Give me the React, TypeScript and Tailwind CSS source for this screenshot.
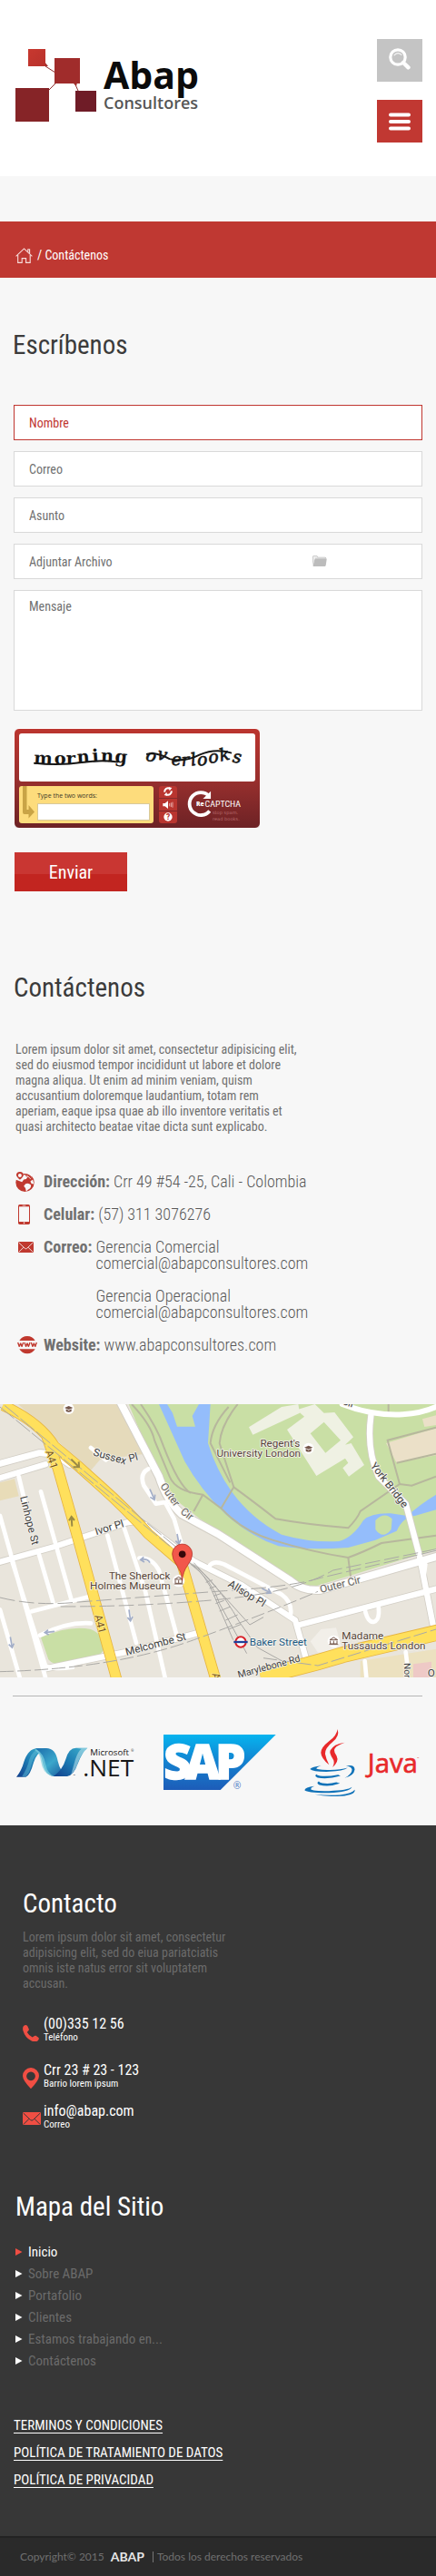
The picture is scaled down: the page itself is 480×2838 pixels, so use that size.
import type { ReactNode } from "react";

const heading = "text-[29px] leading-9";
const field = "block w-full border bg-white px-4 text-sm placeholder:opacity-100 outline-none";
const fieldIdle = "border-[#d9d9d9] text-[#707070] placeholder:text-[#707070]";
const fieldActive = "border-[#c0352f] text-[#c0352f] placeholder:text-[#c0352f]";

function Logo() {
  return (
    <svg viewBox="0 0 204 82" className="block w-[204px]" role="img" aria-label="Abap Consultores">
      <defs>
        <linearGradient id="node1" x1="0" y1="0" x2="1" y2="1">
          <stop offset="0" stopColor="#c8382f" />
          <stop offset="1" stopColor="#b8322c" />
        </linearGradient>
      </defs>
      <g stroke="#8f2a2a" strokeLinecap="round">
        <path d="M31 17 L33 19 L44 26 M33 49 L44 38 M65 37 L69 46" fill="none" strokeWidth="1" />
        <path d="M32 14 L31 19 L36 19 Z M31 43 L37 43 L36 50 Z M63 37 L68 37 L67 41 Z" fill="#a02e2b" strokeWidth="0" />
      </g>
      <rect x="14" y="0" width="19" height="19" fill="url(#node1)" />
      <rect x="43" y="10" width="28" height="28" fill="#a02c2b" />
      <rect x="0" y="43" width="37" height="37" fill="#862427" />
      <rect x="66" y="46" width="23" height="23" fill="#6f1c27" />
      <text x="97" y="44" fontFamily="'Open Sans', sans-serif" fontWeight="700" fontSize="41" fill="#0b0b0b">Abap</text>
      <text x="97" y="66" fontFamily="'Open Sans', sans-serif" fontWeight="600" fontSize="18" fill="#565656">Consultores</text>
    </svg>
  );
}

function SearchIcon() {
  return (
    <svg viewBox="0 0 24 24" className="block w-6" fill="none" stroke="#fff" aria-hidden="true">
      <circle cx="10" cy="10" r="8.2" strokeWidth="3.2" />
      <path d="M16 16 L21.5 21.3" strokeWidth="4.4" strokeLinecap="round" />
      <path d="M6 7.8 Q10 3.6 14 7.4" strokeWidth="1.1" strokeLinecap="round" opacity=".85" />
    </svg>
  );
}

function MenuIcon() {
  return (
    <svg viewBox="0 0 24 20" className="block w-6" stroke="#fff" strokeWidth="4" strokeLinecap="round" aria-hidden="true">
      <path d="M2 2.5 H22 M2 10 H22 M2 17.5 H22" />
    </svg>
  );
}

function HomeIcon() {
  return (
    <svg viewBox="0 0 19 17" className="block w-[19px]" fill="none" stroke="#f7dedc" strokeWidth="1.1" aria-hidden="true">
      <path d="M.6 9.4 L9.5 .9 L18.4 9.4" />
      <path d="M2.7 8 V16.4 H7.2 V11.6 H11.6 V16.4 H16.2 V8" />
      <path d="M13.8 4.8 V1.8 H15.6 V6.5" />
    </svg>
  );
}

function FolderIcon() {
  return (
    <svg viewBox="0 0 48 37" className="block w-4" aria-hidden="true">
      <path d="M0 33 V5 Q0 1 4 1 H15 L19 5 H42 Q45 5 45 9 H6 Z" fill="#bdbdbd" />
      <path d="M2 30 V5 Q2 3 4 3 H14 L18 7 H42 Q43 7 43 8 H9 Q7 8 7 10 Z" fill="#efefef" />
      <path d="M7 13 Q7 10 10 10 H45 Q48 10 47 13 L44 33 Q43 36 40 36 H3 Q1 36 2 33 Z" fill="#bcbcbc" />
    </svg>
  );
}

function CaptchaWords() {
  return (
    <svg viewBox="65 504 777 158" className="block w-full" role="img" aria-label="morning overlooks">
      <g fontFamily="'DejaVu Serif', serif" fill="#161616">
        <text
          fontWeight="700"
          fontSize="58"
          x="113 181 220 256 306 333 379"
          y="604 605 606 602 598 597 598"
          rotate="3 0 0 -4 -4 2 6"
        >
          morning
        </text>
        <text
          fontStyle="italic"
          fontSize="56"
          stroke="#161616"
          strokeWidth="2"
          x="480 516 566 600 632 652 690 728 766"
          y="592 588 608 612 610 610 602 596 598"
          rotate="12 14 2 -4 -8 -4 -6 -12 8"
        >
          overlooks
        </text>
      </g>
      <g fill="none" stroke="#161616" strokeWidth="6" strokeLinecap="round">
        <path d="M116 602 Q200 610 270 600 T388 598" />
        <path d="M486 572 Q520 566 560 588 Q610 600 660 574 Q710 552 762 568" />
      </g>
    </svg>
  );
}

function CaptchaBrand() {
  return (
    <svg viewBox="604 680 230 128" className="block h-[41px] min-w-0 flex-1" role="img" aria-label="reCAPTCHA stop spam. read books.">
      <path d="M685 714 A39 39 0 1 0 687 766" fill="none" stroke="#fff" strokeWidth="12" />
      <path d="M691 698 V724 H664 Z" fill="#fff" />
      <text x="641" y="749" fontFamily="'Open Sans', sans-serif" fontWeight="800" fontSize="21" fill="#fff">Re</text>
      <text x="671" y="752" fontFamily="'Roboto Condensed', sans-serif" fontSize="31" fill="#fff">CAPTCHA</text>
      <text x="780" y="736" fontFamily="'Open Sans', sans-serif" fontSize="7" fill="#e0b0b0">™</text>
      <g fontFamily="'DejaVu Sans', sans-serif" fontSize="16" fill="#b56a6c">
        <text x="697" y="777">stop spam.</text>
        <text x="697" y="799">read books.</text>
      </g>
    </svg>
  );
}

function Captcha() {
  const tool = "flex h-[13px] w-5 items-center justify-center bg-[#b9352f]";
  return (
    <div className="mt-[19px] w-[272px] rounded-md border border-white bg-linear-to-b from-[#bb352f] via-[#9a302e] to-[#6d2225] p-[5px]">
      <div className="overflow-hidden rounded-[3px] bg-white">
        <CaptchaWords />
      </div>
      <div className="mt-[5px] flex items-start gap-1.5">
        <div className="flex h-[41px] w-[148px] rounded-[3px] bg-[#fddc7c]">
          <svg viewBox="0 0 20 41" className="block w-5" aria-hidden="true">
            <path d="M4 0 H8.500 V26 H10.500 V21 L17 28.500 L10.500 35.500 V31 H6 Q4 31 4 29 Z" fill="#c9a446" />
          </svg>
          <div className="flex-1 pr-1">
            <label htmlFor="captcha" className="block pt-[3px] font-['Open_Sans'] text-[7px] leading-4 text-[#403a2a]">
              Type the two words:
            </label>
            <input id="captcha" className="block h-[19px] w-full border border-[#d8c99a] bg-white px-1 text-xs outline-none" />
          </div>
        </div>
        <div className="flex flex-col gap-px overflow-hidden rounded-[3px]">
          <button type="button" aria-label="Otro reto" className={tool}>
            <svg viewBox="0 0 30 30" className="w-[10px]" fill="none" stroke="#fff" strokeWidth="6" aria-hidden="true">
              <path d="M4 17 A11 11 0 0 1 21 6 M26 13 A11 11 0 0 1 9 24" />
              <path d="M17 0 L28 3 L20 13 Z M13 30 L2 27 L10 17 Z" fill="#fff" stroke="none" />
            </svg>
          </button>
          <button type="button" aria-label="Reto de audio" className={tool}>
            <svg viewBox="0 0 36 28" className="w-3" aria-hidden="true">
              <path d="M1 9 H8 L18 1 V27 L8 19 H1 Z" fill="#fff" />
              <path d="M23 9 V19 M28 7 V21 M33 5 V23" stroke="#e5a8a5" strokeWidth="3" />
            </svg>
          </button>
          <button type="button" aria-label="Ayuda" className={tool}>
            <svg viewBox="0 0 30 30" className="w-[10px]" aria-hidden="true">
              <circle cx="15" cy="15" r="14" fill="#fff" />
              <text x="15" y="24" textAnchor="middle" fontFamily="Roboto, sans-serif" fontWeight="900" fontSize="25" fill="#b9352f">?</text>
            </svg>
          </button>
        </div>
        <CaptchaBrand />
      </div>
    </div>
  );
}

function GlobeIcon() {
  return (
    <svg viewBox="0 0 64 68" className="block w-[21px]" aria-hidden="true">
      <circle cx="32" cy="36" r="31" fill="#c0392f" />
      <path d="M26 2 Q46 0 57 14 L50 24 L42 16 L36 24 L28 26 L22 34 L0 26 V0 Z" fill="#f7f7f7" />
      <path d="M27 6 Q44 4 56 18 L50 22 Q42 10 27 10 Z" fill="#c0392f" />
      <path d="M36 8 L40 18 L34 14 Z" fill="#c0392f" />
      <path d="M34 40 Q44 36 52 44 Q54 54 42 60 L36 66 Q36 54 28 48 Z" fill="#f7f7f7" />
      <path d="M58 26 L50 32 L54 40 L62 40 Z" fill="#f7f7f7" />
      <path d="M15 27 Q3 17 3 11 A12 11 0 0 1 27 11 Q27 17 15 27 Z" fill="#c0392f" />
      <circle cx="15" cy="12" r="6" fill="#f7f7f7" />
    </svg>
  );
}

function PhoneIcon() {
  return (
    <svg viewBox="0 0 39 66" className="block w-[13px]" aria-hidden="true">
      <rect width="39" height="66" rx="5" fill="#c0392f" />
      <rect x="3" y="7" width="33" height="50" fill="#f7f7f7" />
      <path d="M14 3.500 H25" stroke="#f7f7f7" strokeWidth="2" />
      <circle cx="19.500" cy="61" r="2.500" fill="#f7f7f7" />
    </svg>
  );
}

function MailIcon({ className, line }: { className: string; line: string }) {
  return (
    <svg viewBox="0 0 60 44" className={className} aria-hidden="true">
      <rect width="60" height="44" rx="3" fill="currentColor" />
      <path d="M2 3 L26 26 Q30 29 34 26 L58 3 M2 41 L21 22 M58 41 L39 22" fill="none" stroke={line} strokeWidth="3" />
    </svg>
  );
}

function WwwIcon() {
  return (
    <svg viewBox="0 0 66 58" className="block w-[22px]" aria-hidden="true">
      <path d="M7 15 Q16 0 33 0 Q50 0 59 15 Z M7 43 Q16 58 33 58 Q50 58 59 43 Z" fill="#c0392f" />
      <path
        d="M2 21 L7 35 L11 23 L15 35 L20 21 M24 21 L29 35 L33 23 L37 35 L42 21 M46 21 L51 35 L55 23 L59 35 L64 21"
        fill="none"
        stroke="#c0392f"
        strokeWidth="4"
        strokeLinejoin="bevel"
      />
    </svg>
  );
}

function ContactRow({ icon, label, children }: { icon: ReactNode; label: string; children: ReactNode }) {
  return (
    <div className="grid grid-cols-[31px_auto_1fr]">
      <dt className="col-span-2 grid grid-cols-subgrid">
        <span className="-my-2 flex h-[34px] items-center">{icon}</span>
        <span className="pr-1 font-bold">{label}</span>
      </dt>
      <dd className="font-light text-[#585858]">{children}</dd>
    </div>
  );
}

function StreetMap() {
  return (
    <svg viewBox="0 21 1440 903" className="mt-14 block w-full" role="img" aria-label="Mapa de Baker Street, Londres">
      <rect y="21" width="1440" height="903" fill="#e9e5dc" />
      <path d="M60 21 H395 L480 185 L330 205 L300 240 L225 175 Z" fill="#e5dabb" />
      <path d="M0 280 L48 268 L62 325 L0 340 Z" fill="#e8dcb8" />
      <path d="M425 21 H1440 V500 L1030 626 Q980 620 930 580 L660 400 L545 310 Z" fill="#c9dfa5" />
      <path d="M135 792 Q230 750 300 765 Q340 780 345 825 Q330 870 240 878 Q180 890 160 865 Z" fill="#c9dfa5" />
      <path d="M1190 870 L1440 830 V924 H1190 Z" fill="#ece1c0" />
      <path d="M1365 880 L1425 872 V924 H1365 Z" fill="#eec9c6" />
      <path d="M1275 150 L1440 100 V190 L1310 215 Z M1395 70 L1440 58 V90 L1402 96 Z" fill="#ebe0c8" />
      <path d="M1025 805 L1060 765 L1110 760 L1130 830 L1050 842 Z" fill="#f2efe9" />

      <path
        d="M525 21 H695 L687 150 Q715 240 765 310 Q830 400 930 452 Q1030 480 1120 474 Q1165 462 1200 405 Q1225 380 1290 382 L1345 390 Q1390 350 1440 320 V370 L1370 390 Q1330 395 1310 440 L1240 470 L1150 495 Q1020 505 920 490 Q830 460 745 385 Q660 300 610 210 Z"
        fill="#94bdfb"
      />
      <path d="M552 21 L570 50 L585 95 L645 95 L635 60 L657 21 Z M1240 405 Q1270 375 1295 400 L1292 435 Q1265 470 1240 435 Z" fill="#c9dfa5" />

      <g fill="none" stroke="#b7b79d" strokeWidth="6">
        <path d="M435 21 Q500 90 510 140 L560 260 Q580 310 670 320 L730 365 Q800 440 900 470 Q1030 510 1150 528 Q1200 510 1260 480 L1440 455" />
        <path d="M465 21 Q520 100 540 160 Q590 290 630 315 M785 21 Q730 90 725 150 L772 295 L730 365 M755 30 Q700 90 695 150 L760 280" />
        <path d="M772 295 Q860 360 910 400 Q1020 420 1150 430 Q1180 400 1190 375 L1320 285 L1360 290 L1440 260 M670 320 L640 375 M1150 528 L1158 590" />
        <path d="M1440 98 L1280 140 L1320 285 M1310 215 L1440 185 M1283 21 V50" />
      </g>

      <g fill="#eff1e3">
        <path d="M822 97 L930 30 L985 21 L990 50 L835 122 Z" />
        <path
          fillRule="evenodd"
          d="M948 105 L1005 62 L980 40 L1040 21 L1070 50 L1105 48 L1167 130 L1140 155 L1160 150 L1203 222 L1152 260 L1132 232 L1150 215 L1140 200 L1045 258 L1005 195 Z M1025 118 L1070 80 L1125 140 L1075 182 Z"
        />
      </g>

      <g fill="none" stroke="#d3cfc6" strokeLinecap="round">
        <path d="M395 10 L525 260 Q550 340 600 385 L720 450 L960 605 Q1000 640 1060 635 L1440 525" strokeWidth="30" />
        <path d="M-10 220 L130 182 Q180 180 230 220" strokeWidth="26" />
        <path d="M-10 545 L180 492 L420 412 Q450 405 480 420 L640 540 L800 620 L975 735 L1010 860" strokeWidth="24" />
        <path d="M-10 268 L150 220 M150 895 L440 835 L650 778 M990 750 L1440 632 M1225 60 Q1210 170 1250 260 L1340 350 L1385 520 L1430 750" strokeWidth="24" />
      </g>
      <g fill="none" stroke="#fff" strokeLinecap="round" strokeLinejoin="round">
        <path d="M1130 21 Q1230 60 1330 55 Q1400 50 1450 25" strokeWidth="18" />
        <path d="M395 10 L525 260 Q550 340 600 385 L720 450 L960 605 Q1000 640 1060 635 L1440 525" strokeWidth="24" />
        <path d="M-10 220 L130 182 Q180 180 230 220" strokeWidth="21" />
        <path d="M-10 545 L180 492 L420 412 Q450 405 480 420 L640 540 L800 620 L975 735 L1010 860" strokeWidth="19" />
        <path d="M-10 268 L150 220 M150 895 L440 835 L650 778 M990 750 L1440 632 M1225 60 Q1210 170 1250 260 L1340 350 L1385 520 L1430 750" strokeWidth="19" />
        <g strokeWidth="14">
          <path d="M0 390 L150 924 M62 260 L105 440 M135 310 L235 665 M128 515 L175 675 M40 540 L150 885 Q170 900 240 890 M0 700 L65 924" />
          <path d="M105 706 L295 657 M132 785 Q220 740 300 745 M355 455 L450 810 M410 430 L480 640 L545 924 M460 530 Q500 525 525 570 L585 790" />
          <path d="M490 235 Q460 250 475 290 L515 350 L545 345 L575 400 L610 520 M300 165 L350 205 M690 560 Q700 535 740 550 L930 650 Q965 675 960 715" />
          <path d="M1205 700 Q1215 745 1235 740 Q1255 735 1250 690 M1205 870 L1210 924 M1340 840 L1345 880 M1405 550 L1400 590" />
        </g>
      </g>

      <g fill="none" strokeLinejoin="round">
        <g stroke="#e6b440" strokeWidth="36">
          <path d="M10 25 Q130 80 180 160 Q260 225 330 290 Q420 370 490 450 L600 545 L712 930" />
          <path d="M155 130 L190 230 L250 440 L385 930" />
          <path d="M860 920 Q1000 890 1130 850 L1450 775" strokeWidth="54" />
        </g>
        <g stroke="#ffe05c" strokeWidth="31">
          <path d="M10 25 Q130 80 180 160 Q260 225 330 290 Q420 370 490 450 L600 545 L712 930" />
          <path d="M155 130 L190 230 L250 440 L385 930" />
          <path d="M860 920 Q1000 890 1130 850 L1450 775" strokeWidth="49" />
        </g>
      </g>

      <g fill="none" stroke="#aaa9a6" strokeWidth="3">
        <path d="M0 30 L560 490 M15 25 L590 500" strokeDasharray="60 8" />
        <path d="M0 660 Q120 690 260 675 L740 638 Q960 625 1060 595 L1440 505" strokeDasharray="50 14" />
        <path d="M200 690 Q480 690 740 665 Q980 640 1100 570 L1440 500" strokeDasharray="50 14" />
        <path d="M0 905 Q380 895 640 800 T1050 640 M870 860 L1050 885 L1440 765" strokeDasharray="45 12" />
        <path d="M625 545 Q680 580 710 660 L770 800 M630 550 Q700 600 725 680 L815 845 M635 550 Q710 600 790 740 L850 825 L950 880 M640 545 L825 750 L870 725" />
        <path d="M680 610 l22 -8 M692 630 l22 -8 M705 655 l24 -8 M712 680 l28 -10 M725 705 l34 -14 M745 735 l40 -18 M755 765 l40 -16" />
      </g>

      <g fill="none" stroke="#a3aec8" strokeWidth="5">
        <path d="M495 302 l15 34 m-14 -8 l14 9 l2 -17 M585 450 l6 32 m-11 -9 l11 10 l6 -14 M426 700 l5 36 m-10 -10 l10 11 l7 -14 M34 790 l6 34 m-11 -9 l11 10 l6 -13 M180 772 l-32 4 m11 -9 l-11 9 l13 7 M495 545 q-8 -15 -30 -10 m10 -9 l-11 9 l13 8 M865 630 l28 14 m-15 2 l16 -1 l-8 -15" />
      </g>
      <path d="M238 425 l-2 -30 m-8 11 l8 -13 l10 12 M235 203 l25 25 m-18 1 l19 0 l-1 -18" fill="none" stroke="#9a8a45" strokeWidth="6" />

      <g fontFamily="Roboto, sans-serif" fontSize="35" fill="#3f3f3f" stroke="#f5f3ee" strokeWidth="5" strokeLinejoin="round" paintOrder="stroke">
        <text transform="translate(306 190) rotate(16)">Sussex</text>
        <text transform="translate(428 213) rotate(-15)">Pl</text>
        <text transform="translate(528 292) rotate(55)" fill="#66635f">Outer</text>
        <text transform="translate(594 380) rotate(37)" fill="#66635f">Cir</text>
        <text transform="translate(66 328) rotate(76)">Linhope St</text>
        <text transform="translate(318 454) rotate(-17)">Ivor Pl</text>
        <text transform="translate(751 622) rotate(31)">Allsop Pl</text>
        <text transform="translate(418 852) rotate(-15)">Melcombe St</text>
        <text transform="translate(1060 645) rotate(-14)" fill="#66635f">Outer Cir</text>
        <text transform="translate(1222 225) rotate(52)">York Bridge</text>
        <text transform="translate(788 926) rotate(-15)" fontSize="32">Marylebone Rd</text>
        <text transform="translate(1334 877) rotate(88)" fontSize="30">Nor</text>
        <text transform="translate(1130 21) rotate(18)">cir</text>
        <text x="1412" y="922">O</text>
        <g fill="#574538">
          <text x="991" y="162" textAnchor="end">Regent's</text>
          <text x="993" y="196" textAnchor="end">University London</text>
          <text x="562" y="599" textAnchor="end">The Sherlock</text>
          <text x="563" y="633" textAnchor="end">Holmes Museum</text>
          <text x="1129" y="798">Madame</text>
          <text x="1129" y="832">Tussauds London</text>
        </g>
        <text x="824" y="818" fill="#1d5b84">Baker Street</text>
        <g fill="#74521a" stroke="#ffe98c">
          <text transform="translate(150 178) rotate(72)">A41</text>
          <text transform="translate(312 720) rotate(76)">A41</text>
          <text transform="translate(700 912) rotate(76)">A</text>
        </g>
      </g>

      <g>
        <circle cx="1019" cy="167" r="18" fill="#fff" />
        <path d="M1005 164 l14 -6 l14 6 l-14 6 Z M1010 168 v8 q9 5 18 0 v-8 l-9 5 Z" fill="#74564a" />
        <circle cx="227" cy="36" r="18" fill="#fff" />
        <path d="M213 33 l14 -6 l14 6 l-14 6 Z M218 37 v8 q9 5 18 0 v-8 l-9 5 Z" fill="#74564a" />
        <circle cx="590" cy="605" r="20" fill="#fff" />
        <circle cx="1102" cy="805" r="20" fill="#fff" />
        <path
          d="M577 600 l13 -8 l13 8 Z M579 603 v10 h22 v-10 M590 603 v10 M575 615 h30 M1089 800 l13 -8 l13 8 Z M1091 803 v10 h22 v-10 M1102 803 v10 M1087 815 h30"
          fill="none"
          stroke="#74564a"
          strokeWidth="3"
        />
        <circle cx="795" cy="807" r="17" fill="#fff" stroke="#d9222a" strokeWidth="6" />
        <path d="M772 807 H818" stroke="#20409a" strokeWidth="7" />
      </g>

      <path d="M602 604 Q600 575 583 552 Q569 534 569 516 A33 33 0 0 1 635 516 Q635 534 620 553 Q604 575 602 604 Z" fill="#f2574b" stroke="#a8281f" strokeWidth="2" />
      <circle cx="602" cy="517" r="11.500" fill="#38080a" />
    </svg>
  );
}

function NetLogo() {
  return (
    <svg viewBox="55 222 390 100" className="block w-[130px]" role="img" aria-label="Microsoft .NET">
      <defs>
        <linearGradient id="netA" x1="0" y1="1" x2="1" y2="0">
          <stop offset="0" stopColor="#123f8c" />
          <stop offset=".5" stopColor="#1d7db4" />
          <stop offset="1" stopColor="#3fb0cc" />
        </linearGradient>
        <linearGradient id="netB" x1="0" y1="0" x2="1" y2="1">
          <stop offset="0" stopColor="#1a6cab" />
          <stop offset=".5" stopColor="#3ba7cb" />
          <stop offset="1" stopColor="#154f97" />
        </linearGradient>
      </defs>
      <path d="M55 320 Q72 300 80 270 Q96 222 128 226 L150 228 Q122 240 112 272 Q100 316 86 320 Z" fill="url(#netA)" />
      <path d="M74 318 Q92 290 98 262 Q108 232 134 226 L142 228 Q114 244 106 276 Q98 312 84 320 Z" fill="#5bb6d3" opacity=".55" />
      <path d="M118 226 Q136 240 142 272 Q150 314 178 318 L226 318 Q200 306 192 268 Q184 222 150 225 Z" fill="url(#netB)" />
      <path d="M120 228 Q146 242 152 280 Q158 310 180 318 L168 316 Q142 306 136 268 Q132 240 116 232 Z" fill="#7fd0e0" opacity=".7" />
      <path d="M178 318 Q208 296 218 262 Q228 224 252 224 L290 224 Q272 238 258 276 Q244 316 222 318 Z" fill="url(#netA)" />
      <path d="M250 224 L290 224 Q272 238 260 268 Q250 300 236 312 Q244 282 250 262 Q258 236 270 227 Z" fill="#bfe3ec" opacity=".55" />
      <g fontFamily="'Open Sans', sans-serif" fill="#161616">
        <text x="243" y="318" fontSize="8">™</text>
        <text x="299" y="249" fontSize="29">Microsoft</text>
        <text x="434" y="238" fontSize="11">®</text>
        <text x="275" y="317" fontSize="79">.NET</text>
      </g>
    </svg>
  );
}

function SapLogo() {
  return (
    <svg viewBox="540 183 372 184" className="block w-[124px]" role="img" aria-label="SAP">
      <defs>
        <linearGradient id="sap" x1="0" y1="0" x2="0" y2="1">
          <stop offset="0" stopColor="#06b4ef" />
          <stop offset=".5" stopColor="#1481cf" />
          <stop offset="1" stopColor="#1d5cb8" />
        </linearGradient>
      </defs>
      <path d="M540 183 H911 L728 366 H540 Z" fill="url(#sap)" />
      <text x="541 612 712" y="330" fontFamily="'Open Sans', sans-serif" fontWeight="800" fontSize="157" fill="#fff" stroke="#fff" strokeWidth="4">
        SAP
      </text>
      <text x="770" y="364" fontFamily="'Open Sans', sans-serif" fontSize="31" fill="#4a78c4">®</text>
    </svg>
  );
}

function JavaLogo() {
  return (
    <svg viewBox="1002 165 382 222" className="block w-[127px]" role="img" aria-label="Java">
      <g fill="#e8292b">
        <path d="M1112 165 Q1120 188 1096 207 Q1070 228 1071 247 Q1074 264 1084 283 Q1058 262 1057 243 Q1057 226 1084 205 Q1110 186 1112 165 Z" />
        <path d="M1136 209 Q1104 220 1101 234 Q1101 242 1109 254 Q1118 272 1096 291 Q1104 274 1097 264 Q1084 246 1088 236 Q1098 214 1136 209 Z" />
      </g>
      <g fill="#1072b8">
        <path d="M1058 286 Q1028 290 1021 297 Q1030 307 1085 306 Q1130 304 1146 293 Q1120 301 1078 300 Q1040 299 1042 295 Q1044 290 1058 286 Z" />
        <path d="M1140 287 Q1168 281 1169 299 Q1166 320 1136 327 Q1160 314 1160 299 Q1158 289 1140 287 Z" />
        <path d="M1042 315 Q1034 321 1046 326 Q1080 332 1122 320 L1114 316 Q1080 323 1054 320 Q1044 318 1042 315 Z" />
        <path d="M1050 338 Q1040 344 1052 350 Q1084 358 1120 345 L1108 341 Q1084 348 1062 344 Q1052 342 1050 338 Z" />
        <path d="M1036 354 Q1004 358 1003 367 Q1014 377 1084 376 Q1150 375 1160 357 Q1146 368 1084 370 Q1026 370 1024 364 Q1024 358 1036 354 Z" />
        <path d="M1036 381 Q1080 386 1120 383 Q1162 378 1169 366 Q1172 382 1126 387 Q1076 390 1036 381 Z" />
      </g>
      <text x="1212" y="309" fontFamily="'Open Sans', sans-serif" fontSize="88" fill="#e8292b" stroke="#e8292b" strokeWidth="2">Java</text>
      <text x="1376" y="264" fontFamily="'Open Sans', sans-serif" fontSize="8" fill="#e8292b">™</text>
    </svg>
  );
}

function HandsetIcon() {
  return (
    <svg viewBox="0 0 52 54" className="mt-[9px] block w-[18px]" aria-hidden="true">
      <path
        d="M3 3 Q10 -3 15 3 L20 14 Q20 18 16 20 L14 23 Q20 34 31 39 L35 36 Q38 33 42 34 L50 40 Q54 44 48 50 Q40 56 27 50 Q8 40 2 20 Q-2 9 3 3 Z"
        fill="#f04e43"
      />
    </svg>
  );
}

function PinIcon() {
  return (
    <svg viewBox="0 0 52 67" className="mt-[5px] block w-[18px]" aria-hidden="true">
      <path fillRule="evenodd" d="M26 67 Q0 40 0 26 A26 26 0 0 1 52 26 Q52 40 26 67 Z M26 13 a14 14 0 1 0 .1 0 Z" fill="#f04e43" />
    </svg>
  );
}

function FooterContact({ icon, title, note, className }: { icon: ReactNode; title: ReactNode; note: string; className: string }) {
  return (
    <li className={`flex ${className}`}>
      <span className="w-[23px] shrink-0">{icon}</span>
      <span>
        <span className="block text-base leading-4">{title}</span>
        <span className="block text-[11px] leading-[13px]">{note}</span>
      </span>
    </li>
  );
}

const siteLinks = ["Inicio", "Sobre ABAP", "Portafolio", "Clientes", "Estamos trabajando en...", "Contáctenos"];
const legalLinks = ["TERMINOS Y CONDICIONES", "POLÍTICA DE TRATAMIENTO DE DATOS", "POLÍTICA DE PRIVACIDAD"];

export default function App() {
  return (
    <div className="bg-[#f7f7f7] font-['Roboto_Condensed',Roboto,sans-serif] text-[#707070]">
      <header className="flex items-start justify-between bg-white pt-[43px] pr-[15px] pb-[37px] pl-[17px]">
        <a href="#inicio" className="mt-[11px]">
          <Logo />
        </a>
        <div className="flex flex-col gap-5">
          <button type="button" aria-label="Buscar" className="flex h-[47px] w-[50px] items-center justify-center bg-[#c4c4c4] pb-1">
            <SearchIcon />
          </button>
          <button type="button" aria-label="Menú" className="flex h-[47px] w-[50px] items-center justify-center bg-[#c13832]">
            <MenuIcon />
          </button>
        </div>
      </header>

      <nav aria-label="Ruta" className="mt-[50px] flex h-[62px] items-center gap-[5px] bg-[#bf3832] px-[17px] pt-3 text-sm text-white">
        <a href="#inicio" aria-label="Inicio">
          <HomeIcon />
        </a>
        <span>/ Contáctenos</span>
      </nav>

      <main>
        <section className="px-[15px] pt-14">
          <h1 className={`${heading} -ml-px text-[#3b3b3b]`}>Escríbenos</h1>
          <form className="mt-12">
            <div className="flex flex-col gap-3">
              <input aria-label="Nombre" placeholder="Nombre" className={`${field} ${fieldActive} h-[39px]`} />
              <input aria-label="Correo" type="email" placeholder="Correo" className={`${field} ${fieldIdle} h-[39px]`} />
              <input aria-label="Asunto" placeholder="Asunto" className={`${field} ${fieldIdle} h-[39px]`} />
              <div className={`${field} ${fieldIdle} relative h-[39px]`}>
                <label htmlFor="archivo" className="flex h-full items-center justify-between">
                  <span>Adjuntar Archivo</span>
                  <span className="mr-[88px]">
                    <FolderIcon />
                  </span>
                </label>
                <input id="archivo" type="file" className="sr-only" />
              </div>
              <textarea aria-label="Mensaje" placeholder="Mensaje" className={`${field} ${fieldIdle} h-[133px] resize-none pt-[7px]`} />
            </div>
            <Captcha />
            <button
              type="submit"
              className="mt-[26px] ml-px block h-[43px] w-[124px] bg-linear-to-b from-[#c93632] from-55% to-[#c22520] to-55% pt-0.5 text-xl text-white"
            >
              Enviar
            </button>
          </form>
        </section>

        <section className="px-[17px] pt-[88px]">
          <h2 className={`${heading} -ml-0.5 text-[#3b3b3b]`}>Contáctenos</h2>
          <p className="mt-[42px] max-w-[316px] text-sm leading-[17px]">
            Lorem ipsum dolor sit amet, consectetur adipisicing elit, sed do eiusmod tempor incididunt ut labore et dolore
            <br />
            magna aliqua. Ut enim ad minim veniam, quism
            <br />
            accusantium doloremque laudantium, totam rem
            <br />
            aperiam, eaque ipsa quae ab illo inventore veritatis et quasi architecto beatae vitae dicta sunt explicabo.
          </p>
          <dl className="mt-[43px] flex flex-col gap-[18px] text-lg leading-[18px]">
            <ContactRow icon={<GlobeIcon />} label="Dirección:">
              Crr 49 #54 -25, Cali - Colombia
            </ContactRow>
            <ContactRow icon={<span className="pl-[3px]"><PhoneIcon /></span>} label="Celular:">
              (57) 311 3076276
            </ContactRow>
            <ContactRow icon={<span className="pl-[3px]"><MailIcon className="block w-[17px] text-[#c0392f]" line="#f7f7f7" /></span>} label="Correo:">
              Gerencia Comercial
              <br />
              <a href="mailto:comercial@abapconsultores.com">comercial@abapconsultores.com</a>
              <span className="mt-[18px] block">Gerencia Operacional</span>
              <a href="mailto:comercial@abapconsultores.com">comercial@abapconsultores.com</a>
            </ContactRow>
            <ContactRow icon={<span className="pl-0.5"><WwwIcon /></span>} label="Website:">
              <a href="#web">www.abapconsultores.com</a>
            </ContactRow>
          </dl>
        </section>

        <StreetMap />

        <section aria-label="Tecnologías" className="px-[15px] pt-5 pb-8">
          <hr className="-ml-px border-[#b5b5b5]" />
          <div className="mt-9 flex items-center justify-between px-[3px]">
            <NetLogo />
            <SapLogo />
            <JavaLogo />
          </div>
        </section>
      </main>

      <footer className="bg-[#373737] text-white">
        <section className="px-[25px] pt-[68px]">
          <h2 className={heading}>Contacto</h2>
          <p className="mt-[11px] max-w-[230px] text-sm leading-[17px] text-[#6b6b6b]">
            Lorem ipsum dolor sit amet, consectetur adipisicing elit, sed do eiua pariatciatis omnis iste natus error sit voluptatem accusan.
          </p>
          <ul>
            <FooterContact className="mt-7" icon={<HandsetIcon />} title="(00)335 12 56" note="Teléfono" />
            <FooterContact className="mt-[22px]" icon={<PinIcon />} title="Crr 23 # 23 - 123" note="Barrio lorem ipsum" />
            <FooterContact
              className="mt-4"
              icon={<MailIcon className="mt-[9px] block w-5 text-[#f04e43]" line="#373737" />}
              title={<a href="mailto:info@abap.com">info@abap.com</a>}
              note="Correo"
            />
          </ul>
        </section>

        <section className="px-[17px] pt-[66px]">
          <h2 className={heading}>Mapa del Sitio</h2>
          <ul className="mt-5 text-[15px] leading-6">
            {siteLinks.map((label, i) => (
              <li key={label}>
                <a href="#sitio" className={`flex items-center gap-[6px] ${i === 0 ? "text-white" : "text-[#6b6b6b]"}`}>
                  <svg viewBox="0 0 8 8" className={`w-2 ${i === 0 ? "text-[#f04e43]" : "text-white"}`} aria-hidden="true">
                    <path d="M0 0 L7.500 4 L0 8 Z" fill="currentColor" />
                  </svg>
                  {label}
                </a>
              </li>
            ))}
          </ul>
        </section>

        <ul className="px-[15px] pt-[44px] pb-[47px] text-[15px] leading-[30px]">
          {legalLinks.map((label) => (
            <li key={label}>
              <a href="#legal" className="underline underline-offset-3">
                {label}
              </a>
            </li>
          ))}
        </ul>

        <div className="flex h-[45px] items-center border-t-2 border-[#222] bg-[#2a2a2a] px-[22px] font-['Lato',sans-serif] text-xs text-[#707070]">
          <span>Copyright© 2015</span>
          <strong className="ml-[7px] text-sm text-[#e6e6e6]">ABAP</strong>
          <span className="mr-1 ml-[9px] h-3 w-px bg-[#777]" />
          <span>Todos los derechos reservados</span>
        </div>
      </footer>
    </div>
  );
}
